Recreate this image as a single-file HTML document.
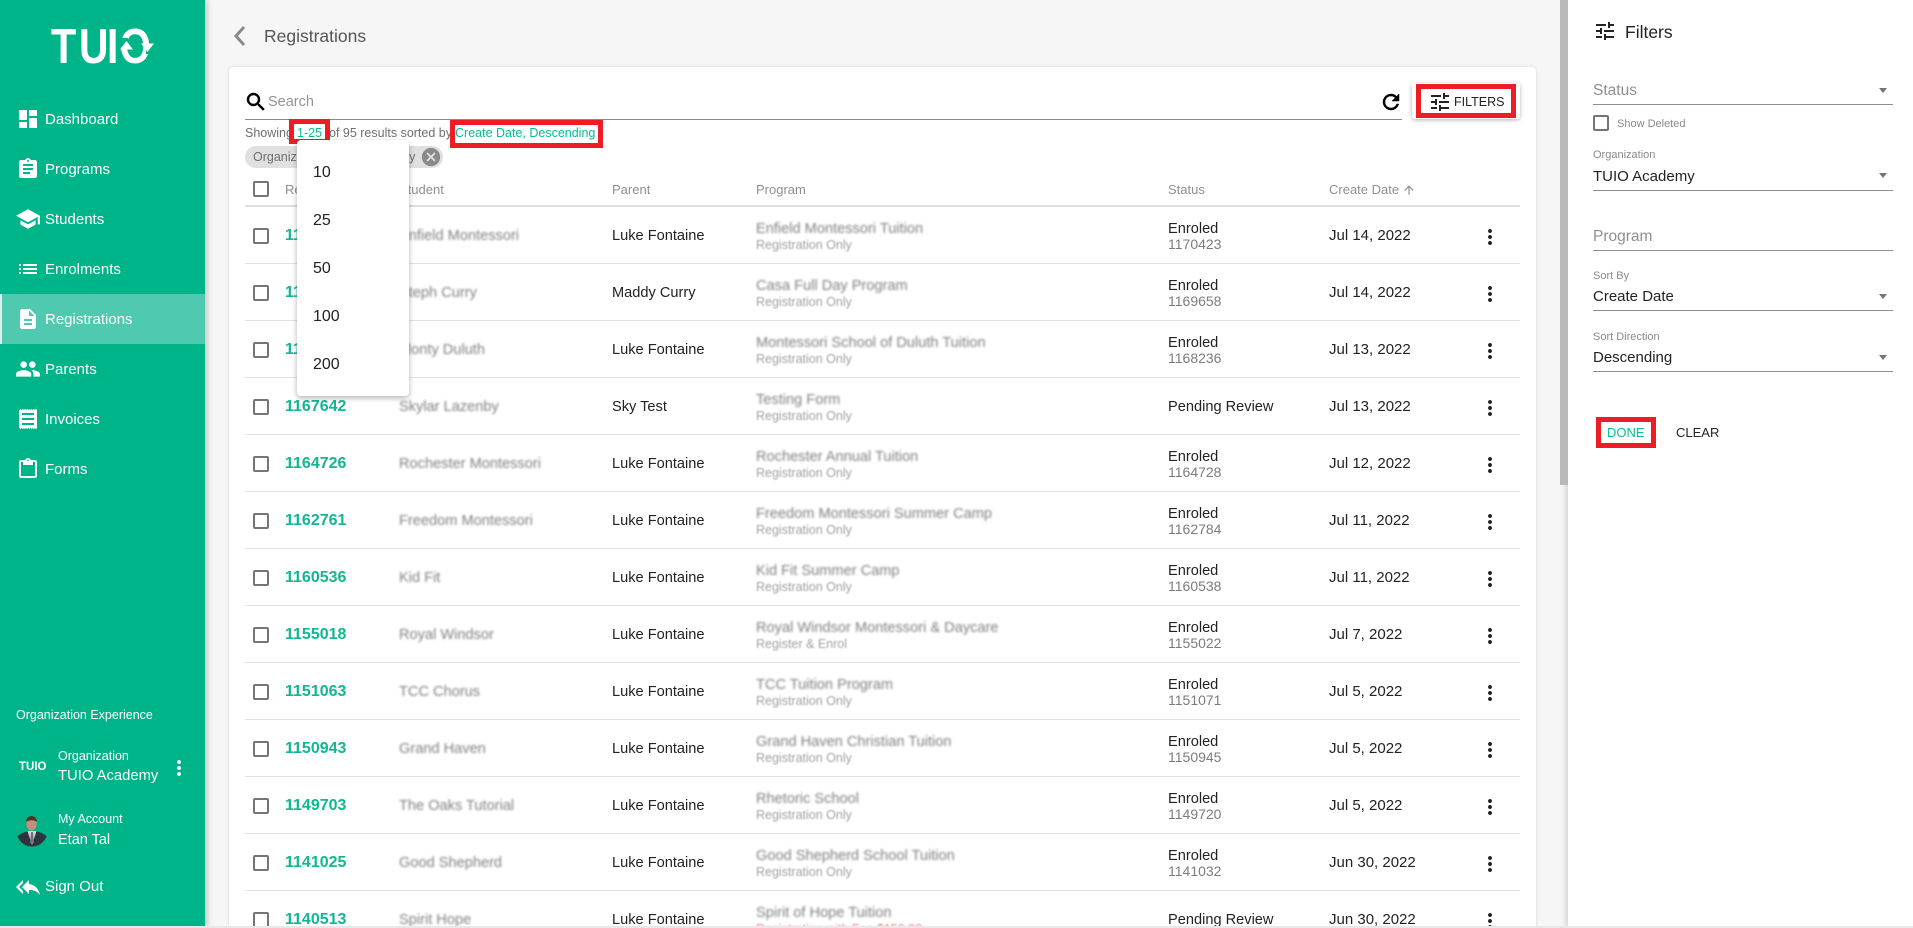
<!DOCTYPE html>
<html lang="en"><head><meta charset="utf-8"><title>Registrations</title>
<style>
html,body{margin:0;padding:0;width:1913px;height:928px;overflow:hidden;background:#f6f6f6;font-family:"Liberation Sans",Arial,sans-serif}
#root{position:absolute;left:0;top:0;width:1913px;height:928px;overflow:hidden;background:#f6f6f6}
.a,.t{position:absolute}
.t{white-space:nowrap;line-height:20px;margin-top:1px}
svg{display:block;position:absolute}
#side{position:absolute;left:0;top:0;width:205px;height:928px;background:#00b48a;box-shadow:2px 0 6px rgba(0,0,0,.22);color:#fff}
#side .n{left:45px;font-size:15px;color:#fff}
#side svg{fill:#fff}
#hl{position:absolute;left:0;top:294px;width:205px;height:50px;background:#4fcab0;border-left:2px solid #d5f3ec;box-sizing:border-box}
#card{position:absolute;left:229px;top:67px;width:1307px;height:861px;background:#fff;border-radius:4px 4px 0 0;box-shadow:0 0 3px rgba(0,0,0,.14)}
.r{position:absolute;left:245px;width:1275px;height:57px;border-bottom:1px solid #e2e2e2;box-sizing:content-box}
.r .t{font-size:14.6px;color:#222}
.cb{position:absolute;box-sizing:border-box;width:16px;height:16px;border:2px solid #757575;border-radius:2px}
.r .cb{left:8px;top:22px}
.r .id{left:40px;top:19px;font-size:16px;font-weight:bold;color:#12b692}
.r .st{left:154px;top:19px;color:#808080;filter:blur(1px);font-size:14.6px}
.r .pa{left:367px;top:19px}
.r .pg{left:511px;top:12px;color:#808080;filter:blur(1px);font-size:14.6px}
.r .sb{left:511px;top:28px;color:#a0a0a0;filter:blur(.9px);font-size:12.5px}
.r .s1{left:923px;top:12px}
.r .s2{left:923px;top:27px;color:#7c7c7c;font-size:14px}
.r .s0{left:923px;top:19px}
.r .dt{left:1084px;top:19px;font-size:15px}
.r svg{left:1233px;top:19px;fill:#222}
.hd{top:179px;font-size:13px;color:#8f8f8f}
.red{position:absolute;box-sizing:border-box;border:5px solid #ee1c25}
.g{color:#05bc95}
#dd{position:absolute;left:297px;top:140px;width:112px;height:256px;background:#fff;border-radius:4px;box-shadow:0 2px 6px rgba(0,0,0,.3)}
#dd .t{left:16px;font-size:16px;color:#222}
#dr{position:absolute;left:1568px;top:0;width:345px;height:928px;background:#fff;box-shadow:-3px 0 5px rgba(0,0,0,.12)}
.line{position:absolute;left:25px;width:300px;height:1px;background:#8f8f8f}
.lab{left:25px;font-size:11px;color:#8a8a8a}
.val{left:25px;font-size:15px;color:#222}
.ph{left:25px;font-size:15.5px;color:#8f8f8f}
.arr{position:absolute;left:311px;width:0;height:0;border-left:4.5px solid transparent;border-right:4.5px solid transparent;border-top:5px solid #757575}
</style></head><body>
<div id="root">

<div id="card"></div>
<div class="a" style="left:1560px;top:0;width:8px;height:485px;background:#b9b9b9;z-index:3"></div>

<svg style="left:231px;top:23px" width="18" height="26" viewBox="0 0 18 26"><path d="M13 4 5 13l8 9" fill="none" stroke="#8a8a8a" stroke-width="3"/></svg>
<div class="t" style="left:264px;top:25px;font-size:17.5px;color:#555">Registrations</div>

<svg style="left:244px;top:90px" width="24" height="24" viewBox="0 0 24 24"><path d="M15.5 14h-.79l-.28-.27C15.41 12.59 16 11.11 16 9.5 16 5.91 13.09 3 9.5 3S3 5.91 3 9.5 5.91 16 9.5 16c1.61 0 3.09-.59 4.23-1.57l.27.28v.79l5 4.99L20.49 19l-4.99-5zm-6 0C7.01 14 5 11.99 5 9.5S7.01 5 9.5 5 14 7.01 14 9.5 11.99 14 9.5 14z" stroke="#000" stroke-width=".5"/></svg>
<div class="t" style="left:268px;top:91px;font-size:14.5px;color:#949494">Search</div>
<div class="a" style="left:245px;top:119px;width:1157px;height:1px;background:#8a8a8a"></div>
<svg style="left:1379px;top:90px" width="24" height="24" viewBox="0 0 24 24"><path d="M17.65 6.35C16.2 4.9 14.21 4 12 4c-4.42 0-7.99 3.58-7.99 8s3.57 8 7.99 8c3.73 0 6.84-2.55 7.73-6h-2.08c-.82 2.33-3.04 4-5.65 4-3.31 0-6-2.69-6-6s2.69-6 6-6c1.66 0 3.14.69 4.22 1.78L13 11h7V4l-2.35 2.35z" stroke="#000" stroke-width=".5"/></svg>

<div class="a" style="left:1412px;top:83px;width:108px;height:36px;background:#fff;border-radius:3px;box-shadow:0 1px 4px rgba(0,0,0,.3)"></div>
<svg style="left:1428px;top:90px" width="24" height="24" viewBox="0 0 24 24" fill="#222"><path d="M3 17v2h6v-2H3zM3 5v2h10V5H3zm10 16v-2h8v-2h-8v-2h-2v6h2zM7 9v2H3v2h4v2h2V9H7zm14 4v-2H11v2h10zm-6-4h2V7h4V5h-4V3h-2v6z"/></svg>
<div class="t" style="left:1454px;top:91px;font-size:12.5px;color:#222">FILTERS</div>
<div class="red" style="left:1416px;top:84px;width:100px;height:34px"></div>

<div class="t" style="left:245px;top:122px;font-size:12.5px;color:#6f6f6f">Showing</div>
<div class="t" style="left:297px;top:122px;font-size:12.5px"><span class="g">1-25</span></div>
<div class="t" style="left:329px;top:122px;font-size:12.5px;color:#6f6f6f">of 95 results sorted by</div>
<div class="t g" style="left:455px;top:122px;font-size:12.5px">Create Date, Descending</div>
<div class="red" style="left:289px;top:119px;width:41px;height:25px"></div>
<div class="red" style="left:450px;top:120px;width:153px;height:28px"></div>

<div class="a" style="left:245px;top:146px;width:198px;height:22px;border-radius:11px;background:#e0e0e0"></div>
<div class="t" style="left:253px;top:146px;font-size:12.5px;color:#6f6f6f">Organization: TUIO Academy</div>
<svg style="left:420px;top:146px" width="22" height="22" viewBox="0 0 24 24" fill="#8a8a8a"><path d="M12 2C6.47 2 2 6.47 2 12s4.47 10 10 10 10-4.47 10-10S17.53 2 12 2zm5 13.59L15.59 17 12 13.41 8.41 17 7 15.59 10.59 12 7 8.41 8.41 7 12 10.59 15.59 7 17 8.41 13.41 12 17 15.59z"/></svg>

<div class="cb" style="left:253px;top:181px"></div>
<div class="t hd" style="left:285px">Registration</div>
<div class="t hd" style="left:399px">Student</div>
<div class="t hd" style="left:612px">Parent</div>
<div class="t hd" style="left:756px">Program</div>
<div class="t hd" style="left:1168px">Status</div>
<div class="t hd" style="left:1329px">Create Date</div>
<svg style="left:1402px;top:183px" width="14" height="14" viewBox="0 0 24 24" fill="#8f8f8f"><path d="M4 12l1.41 1.41L11 7.83V20h2V7.83l5.58 5.59L20 12l-8-8-8 8z"/></svg>
<div class="a" style="left:245px;top:205px;width:1275px;height:2px;background:#dedede"></div>

<div class="r" style="top:206px"><div class="cb"></div><div class="t id">1170421</div><div class="t st">Enfield Montessori</div><div class="t pa">Luke Fontaine</div><div class="t pg">Enfield Montessori Tuition</div><div class="t sb">Registration Only</div><div class="t s1">Enroled</div><div class="t s2">1170423</div><div class="t dt">Jul 14, 2022</div><svg width="24" height="24" viewBox="0 0 24 24"><path d="M12 8c1.1 0 2-.9 2-2s-.9-2-2-2-2 .9-2 2 .9 2 2 2zm0 2c-1.1 0-2 .9-2 2s.9 2 2 2 2-.9 2-2-.9-2-2-2zm0 6c-1.1 0-2 .9-2 2s.9 2 2 2 2-.9 2-2-.9-2-2-2z"/></svg></div>
<div class="r" style="top:263px"><div class="cb"></div><div class="t id">1169656</div><div class="t st">Steph Curry</div><div class="t pa">Maddy Curry</div><div class="t pg">Casa Full Day Program</div><div class="t sb">Registration Only</div><div class="t s1">Enroled</div><div class="t s2">1169658</div><div class="t dt">Jul 14, 2022</div><svg width="24" height="24" viewBox="0 0 24 24"><path d="M12 8c1.1 0 2-.9 2-2s-.9-2-2-2-2 .9-2 2 .9 2 2 2zm0 2c-1.1 0-2 .9-2 2s.9 2 2 2 2-.9 2-2-.9-2-2-2zm0 6c-1.1 0-2 .9-2 2s.9 2 2 2 2-.9 2-2-.9-2-2-2z"/></svg></div>
<div class="r" style="top:320px"><div class="cb"></div><div class="t id">1168234</div><div class="t st">Monty Duluth</div><div class="t pa">Luke Fontaine</div><div class="t pg">Montessori School of Duluth Tuition</div><div class="t sb">Registration Only</div><div class="t s1">Enroled</div><div class="t s2">1168236</div><div class="t dt">Jul 13, 2022</div><svg width="24" height="24" viewBox="0 0 24 24"><path d="M12 8c1.1 0 2-.9 2-2s-.9-2-2-2-2 .9-2 2 .9 2 2 2zm0 2c-1.1 0-2 .9-2 2s.9 2 2 2 2-.9 2-2-.9-2-2-2zm0 6c-1.1 0-2 .9-2 2s.9 2 2 2 2-.9 2-2-.9-2-2-2z"/></svg></div>
<div class="r" style="top:377px"><div class="cb"></div><div class="t id">1167642</div><div class="t st">Skylar Lazenby</div><div class="t pa">Sky Test</div><div class="t pg">Testing Form</div><div class="t sb">Registration Only</div><div class="t s0">Pending Review</div><div class="t dt">Jul 13, 2022</div><svg width="24" height="24" viewBox="0 0 24 24"><path d="M12 8c1.1 0 2-.9 2-2s-.9-2-2-2-2 .9-2 2 .9 2 2 2zm0 2c-1.1 0-2 .9-2 2s.9 2 2 2 2-.9 2-2-.9-2-2-2zm0 6c-1.1 0-2 .9-2 2s.9 2 2 2 2-.9 2-2-.9-2-2-2z"/></svg></div>
<div class="r" style="top:434px"><div class="cb"></div><div class="t id">1164726</div><div class="t st">Rochester Montessori</div><div class="t pa">Luke Fontaine</div><div class="t pg">Rochester Annual Tuition</div><div class="t sb">Registration Only</div><div class="t s1">Enroled</div><div class="t s2">1164728</div><div class="t dt">Jul 12, 2022</div><svg width="24" height="24" viewBox="0 0 24 24"><path d="M12 8c1.1 0 2-.9 2-2s-.9-2-2-2-2 .9-2 2 .9 2 2 2zm0 2c-1.1 0-2 .9-2 2s.9 2 2 2 2-.9 2-2-.9-2-2-2zm0 6c-1.1 0-2 .9-2 2s.9 2 2 2 2-.9 2-2-.9-2-2-2z"/></svg></div>
<div class="r" style="top:491px"><div class="cb"></div><div class="t id">1162761</div><div class="t st">Freedom Montessori</div><div class="t pa">Luke Fontaine</div><div class="t pg">Freedom Montessori Summer Camp</div><div class="t sb">Registration Only</div><div class="t s1">Enroled</div><div class="t s2">1162784</div><div class="t dt">Jul 11, 2022</div><svg width="24" height="24" viewBox="0 0 24 24"><path d="M12 8c1.1 0 2-.9 2-2s-.9-2-2-2-2 .9-2 2 .9 2 2 2zm0 2c-1.1 0-2 .9-2 2s.9 2 2 2 2-.9 2-2-.9-2-2-2zm0 6c-1.1 0-2 .9-2 2s.9 2 2 2 2-.9 2-2-.9-2-2-2z"/></svg></div>
<div class="r" style="top:548px"><div class="cb"></div><div class="t id">1160536</div><div class="t st">Kid Fit</div><div class="t pa">Luke Fontaine</div><div class="t pg">Kid Fit Summer Camp</div><div class="t sb">Registration Only</div><div class="t s1">Enroled</div><div class="t s2">1160538</div><div class="t dt">Jul 11, 2022</div><svg width="24" height="24" viewBox="0 0 24 24"><path d="M12 8c1.1 0 2-.9 2-2s-.9-2-2-2-2 .9-2 2 .9 2 2 2zm0 2c-1.1 0-2 .9-2 2s.9 2 2 2 2-.9 2-2-.9-2-2-2zm0 6c-1.1 0-2 .9-2 2s.9 2 2 2 2-.9 2-2-.9-2-2-2z"/></svg></div>
<div class="r" style="top:605px"><div class="cb"></div><div class="t id">1155018</div><div class="t st">Royal Windsor</div><div class="t pa">Luke Fontaine</div><div class="t pg">Royal Windsor Montessori &amp; Daycare</div><div class="t sb">Register &amp; Enrol</div><div class="t s1">Enroled</div><div class="t s2">1155022</div><div class="t dt">Jul 7, 2022</div><svg width="24" height="24" viewBox="0 0 24 24"><path d="M12 8c1.1 0 2-.9 2-2s-.9-2-2-2-2 .9-2 2 .9 2 2 2zm0 2c-1.1 0-2 .9-2 2s.9 2 2 2 2-.9 2-2-.9-2-2-2zm0 6c-1.1 0-2 .9-2 2s.9 2 2 2 2-.9 2-2-.9-2-2-2z"/></svg></div>
<div class="r" style="top:662px"><div class="cb"></div><div class="t id">1151063</div><div class="t st">TCC Chorus</div><div class="t pa">Luke Fontaine</div><div class="t pg">TCC Tuition Program</div><div class="t sb">Registration Only</div><div class="t s1">Enroled</div><div class="t s2">1151071</div><div class="t dt">Jul 5, 2022</div><svg width="24" height="24" viewBox="0 0 24 24"><path d="M12 8c1.1 0 2-.9 2-2s-.9-2-2-2-2 .9-2 2 .9 2 2 2zm0 2c-1.1 0-2 .9-2 2s.9 2 2 2 2-.9 2-2-.9-2-2-2zm0 6c-1.1 0-2 .9-2 2s.9 2 2 2 2-.9 2-2-.9-2-2-2z"/></svg></div>
<div class="r" style="top:719px"><div class="cb"></div><div class="t id">1150943</div><div class="t st">Grand Haven</div><div class="t pa">Luke Fontaine</div><div class="t pg">Grand Haven Christian Tuition</div><div class="t sb">Registration Only</div><div class="t s1">Enroled</div><div class="t s2">1150945</div><div class="t dt">Jul 5, 2022</div><svg width="24" height="24" viewBox="0 0 24 24"><path d="M12 8c1.1 0 2-.9 2-2s-.9-2-2-2-2 .9-2 2 .9 2 2 2zm0 2c-1.1 0-2 .9-2 2s.9 2 2 2 2-.9 2-2-.9-2-2-2zm0 6c-1.1 0-2 .9-2 2s.9 2 2 2 2-.9 2-2-.9-2-2-2z"/></svg></div>
<div class="r" style="top:776px"><div class="cb"></div><div class="t id">1149703</div><div class="t st">The Oaks Tutorial</div><div class="t pa">Luke Fontaine</div><div class="t pg">Rhetoric School</div><div class="t sb">Registration Only</div><div class="t s1">Enroled</div><div class="t s2">1149720</div><div class="t dt">Jul 5, 2022</div><svg width="24" height="24" viewBox="0 0 24 24"><path d="M12 8c1.1 0 2-.9 2-2s-.9-2-2-2-2 .9-2 2 .9 2 2 2zm0 2c-1.1 0-2 .9-2 2s.9 2 2 2 2-.9 2-2-.9-2-2-2zm0 6c-1.1 0-2 .9-2 2s.9 2 2 2 2-.9 2-2-.9-2-2-2z"/></svg></div>
<div class="r" style="top:833px"><div class="cb"></div><div class="t id">1141025</div><div class="t st">Good Shepherd</div><div class="t pa">Luke Fontaine</div><div class="t pg">Good Shepherd School Tuition</div><div class="t sb">Registration Only</div><div class="t s1">Enroled</div><div class="t s2">1141032</div><div class="t dt">Jun 30, 2022</div><svg width="24" height="24" viewBox="0 0 24 24"><path d="M12 8c1.1 0 2-.9 2-2s-.9-2-2-2-2 .9-2 2 .9 2 2 2zm0 2c-1.1 0-2 .9-2 2s.9 2 2 2 2-.9 2-2-.9-2-2-2zm0 6c-1.1 0-2 .9-2 2s.9 2 2 2 2-.9 2-2-.9-2-2-2z"/></svg></div>
<div class="r" style="top:890px;border:0"><div class="cb"></div><div class="t id">1140513</div><div class="t st">Spirit Hope</div><div class="t pa">Luke Fontaine</div><div class="t pg">Spirit of Hope Tuition</div><div class="t sb" style="color:#e58a8a">Registration with Fee $150.00</div><div class="t s0">Pending Review</div><div class="t dt">Jun 30, 2022</div><svg width="24" height="24" viewBox="0 0 24 24"><path d="M12 8c1.1 0 2-.9 2-2s-.9-2-2-2-2 .9-2 2 .9 2 2 2zm0 2c-1.1 0-2 .9-2 2s.9 2 2 2 2-.9 2-2-.9-2-2-2zm0 6c-1.1 0-2 .9-2 2s.9 2 2 2 2-.9 2-2-.9-2-2-2z"/></svg></div>

<div id="dd">
<div class="t" style="top:22px">10</div>
<div class="t" style="top:70px">25</div>
<div class="t" style="top:118px">50</div>
<div class="t" style="top:166px">100</div>
<div class="t" style="top:214px">200</div>
</div>

<div id="side">
<svg style="left:48px;top:24px" width="112" height="44" viewBox="48 24 112 44">
<g font-family="Liberation Sans,sans-serif" font-weight="bold" font-size="48" fill="#fff">
<text transform="translate(51,63) scale(.86,1.02)">T</text>
<text transform="translate(79,63) scale(.85,1.02)">U</text>
<text transform="translate(107,63) scale(.85,1.02)">I</text>
<text transform="translate(119.5,63) scale(.84,1.02)">O</text>
</g>
<rect x="119" y="38" width="9" height="9" fill="#00b48a"/>
<rect x="146" y="45" width="9" height="9" fill="#00b48a"/>
<path d="M120 49.500 126.500 41l6.500 8.500z" fill="#fff"/>
<path d="M141 43.500 147.500 52l6.500-8.500z" fill="#fff"/>
</svg>

<div id="hl"></div>
<svg style="left:16px;top:107px" width="24" height="24" viewBox="0 0 24 24"><path d="M3 13h8V3H3v10zm0 8h8v-6H3v6zm10 0h8V11h-8v10zm0-18v6h8V3h-8z"/></svg>
<div class="t n" style="top:109px">Dashboard</div>
<svg style="left:16px;top:157px" width="24" height="24" viewBox="0 0 24 24"><path d="M19 3h-4.180C14.400 1.840 13.300 1 12 1c-1.300 0-2.400.84-2.820 2H5c-1.100 0-2 .9-2 2v14c0 1.100.9 2 2 2h14c1.100 0 2-.9 2-2V5c0-1.100-.9-2-2-2zm-7 0c.55 0 1 .45 1 1s-.45 1-1 1-1-.45-1-1 .45-1 1-1zm2 14H7v-2h7v2zm3-4H7v-2h10v2zm0-4H7V7h10v2z"/></svg>
<div class="t n" style="top:159px">Programs</div>
<svg style="left:15px;top:206px" width="26" height="26" viewBox="0 0 24 24"><path d="M5 13.180v4L12 21l7-3.820v-4L12 17l-7-3.820zM12 3L1 9l11 6 9-4.910V17h2V9L12 3z"/></svg>
<div class="t n" style="top:209px">Students</div>
<svg style="left:16px;top:257px" width="24" height="24" viewBox="0 0 24 24"><path d="M3 13h2v-2H3v2zm0 4h2v-2H3v2zm0-8h2V7H3v2zm4 4h14v-2H7v2zm0 4h14v-2H7v2zM7 7v2h14V7H7z"/></svg>
<div class="t n" style="top:259px">Enrolments</div>
<svg style="left:16px;top:307px" width="24" height="24" viewBox="0 0 24 24"><path d="M14 2H6c-1.100 0-1.990.9-1.990 2L4 20c0 1.100.89 2 1.990 2H18c1.100 0 2-.9 2-2V8l-6-6zm2 16H8v-2h8v2zm0-4H8v-2h8v2zm-3-5V3.500L18.500 9H13z"/></svg>
<div class="t n" style="top:309px">Registrations</div>
<svg style="left:15px;top:356px" width="26" height="26" viewBox="0 0 24 24"><path d="M16 11c1.660 0 2.990-1.340 2.990-3S17.660 5 16 5c-1.660 0-3 1.340-3 3s1.340 3 3 3zm-8 0c1.660 0 2.990-1.340 2.990-3S9.660 5 8 5C6.340 5 5 6.340 5 8s1.340 3 3 3zm0 2c-2.330 0-7 1.170-7 3.500V19h14v-2.500c0-2.330-4.670-3.500-7-3.500zm8 0c-.29 0-.62.02-.97.05 1.160.84 1.970 1.970 1.970 3.450V19h6v-2.500c0-2.330-4.670-3.500-7-3.500z"/></svg>
<div class="t n" style="top:359px">Parents</div>
<svg style="left:16px;top:407px" width="24" height="24" viewBox="0 0 24 24"><path fill-rule="evenodd" d="M3 2h18v20H3zM6 6v2h12V6zM6 11v2h12v-2zM6 16v2h12v-2z"/><path d="M3 2.500h18M3 21.500h18" stroke="#00b48a" stroke-width="1" stroke-dasharray="1 1.200" fill="none"/></svg>
<div class="t n" style="top:409px">Invoices</div>
<svg style="left:16px;top:457px" width="24" height="24" viewBox="0 0 24 24"><path d="M19 3h-4.180C14.400 1.840 13.300 1 12 1s-2.400.84-2.820 2H5c-1.100 0-2 .9-2 2v14c0 1.100.9 2 2 2h14c1.100 0 2-.9 2-2V5c0-1.100-.9-2-2-2zm-7-.25c.41 0 .75.34.75.75s-.34.75-.75.75-.75-.34-.75-.75.34-.75.75-.75zM19 19H5V5h2v3h10V5h2v14z"/></svg>
<div class="t n" style="top:459px">Forms</div>

<div class="t" style="left:16px;top:704px;font-size:12.5px">Organization Experience</div>
<div class="t" style="left:19px;top:756px;font-size:11.5px;font-weight:bold">TUIO</div>
<div class="t" style="left:58px;top:745px;font-size:12.5px">Organization</div>
<div class="t" style="left:58px;top:765px;font-size:14.8px">TUIO Academy</div>
<svg style="left:167px;top:756px" width="24" height="24" viewBox="0 0 24 24"><path d="M12 8c1.100 0 2-.9 2-2s-.9-2-2-2-2 .9-2 2 .9 2 2 2zm0 2c-1.100 0-2 .9-2 2s.9 2 2 2 2-.9 2-2-.9-2-2-2zm0 6c-1.100 0-2 .9-2 2s.9 2 2 2 2-.9 2-2-.9-2-2-2z"/></svg>
<svg style="left:17px;top:815px" width="30" height="32" viewBox="0 0 30 32">
<defs><clipPath id="av"><circle cx="15" cy="16" r="15.500"/></clipPath></defs>
<g clip-path="url(#av)"><path d="M0 22c3-4 9-5 11-6h8c2 1 8 2 11 6v10H0z" fill="#2d3640"/><path d="M10.500 16l4.500 14 4.500-14z" fill="#d5d9dc"/><path d="M14 17h2l1 11h-4z" fill="#6d7680"/><ellipse cx="14.500" cy="9" rx="5.200" ry="6.500" fill="#c09078"/><path d="M9 7c0-4 3-6 5.500-6s5.500 2 5.500 6c-2-2-8-2.500-11 0z" fill="#4a3426"/></g></svg>
<div class="t" style="left:58px;top:808px;font-size:12.5px">My Account</div>
<div class="t" style="left:58px;top:829px;font-size:14.5px">Etan Tal</div>
<svg style="left:16px;top:875px" width="24" height="24" viewBox="0 0 24 24"><path d="M7 8V5l-7 7 7 7v-3l-4-4 4-4zm6 1V5l-7 7 7 7v-4.100c5 0 8.500 1.600 11 5.100-1-5-4-10-11-11z"/></svg>
<div class="t n" style="top:876px">Sign Out</div>
</div>

<div id="dr">
<svg style="left:25px;top:19px" width="24" height="24" viewBox="0 0 24 24" fill="#222"><path d="M3 17v2h6v-2H3zM3 5v2h10V5H3zm10 16v-2h8v-2h-8v-2h-2v6h2zM7 9v2H3v2h4v2h2V9H7zm14 4v-2H11v2h10zm-6-4h2V7h4V5h-4V3h-2v6z"/></svg>
<div class="t" style="left:57px;top:21px;font-size:17.5px;color:#222">Filters</div>
<div class="t ph" style="top:80px">Status</div>
<div class="arr" style="top:88px"></div>
<div class="line" style="top:104px"></div>
<div class="cb" style="left:25px;top:115px"></div>
<div class="t" style="left:49px;top:113px;font-size:11px;color:#8a8a8a">Show Deleted</div>
<div class="t lab" style="top:144px">Organization</div>
<div class="t val" style="top:166px">TUIO Academy</div>
<div class="arr" style="top:173px"></div>
<div class="line" style="top:190px"></div>
<div class="t ph" style="top:226px">Program</div>
<div class="line" style="top:250px"></div>
<div class="t lab" style="top:265px">Sort By</div>
<div class="t val" style="top:286px">Create Date</div>
<div class="arr" style="top:294px"></div>
<div class="line" style="top:310px"></div>
<div class="t lab" style="top:326px">Sort Direction</div>
<div class="t val" style="top:347px">Descending</div>
<div class="arr" style="top:355px"></div>
<div class="line" style="top:371px"></div>
<div class="t g" style="left:39px;top:422px;font-size:13px">DONE</div>
<div class="t" style="left:108px;top:422px;font-size:13px;color:#222">CLEAR</div>
<div class="red" style="left:28px;top:417px;width:60px;height:31px"></div>
</div>

<div class="a" style="left:0;top:926px;width:1913px;height:2px;background:#ebe7e9;z-index:5"></div>
</div>
</body></html>
